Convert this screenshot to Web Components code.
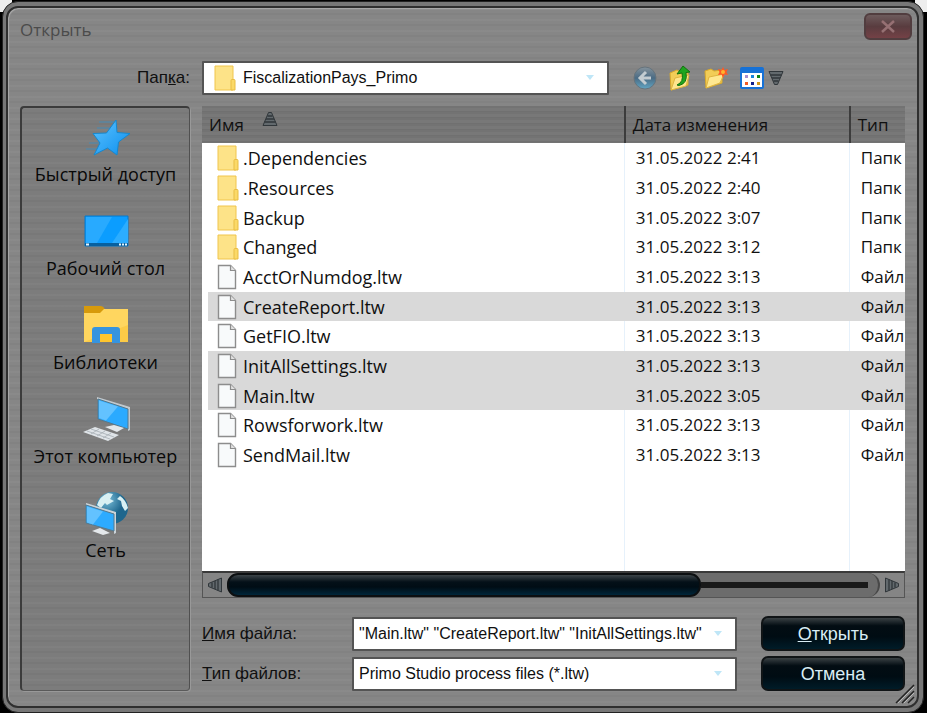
<!DOCTYPE html>
<html lang="ru">
<head>
<meta charset="utf-8">
<title>Открыть</title>
<style>
html,body{height:100%;margin:0;background:#000}
body{font-family:"Open Sans","Noto Sans",sans-serif;font-size:18px;color:#101010}
</style>
</head>
<body>
<open-dialog></open-dialog>
<script>
const define=(name,html,init)=>{
  const t=document.createElement('template');t.innerHTML=html;
  customElements.define(name,class extends HTMLElement{
    constructor(){super();this.attachShadow({mode:'open'}).append(t.content.cloneNode(true));}
    connectedCallback(){if(init&&!this.ready){this.ready=true;init(this,this.shadowRoot);}}
  });
};

const icons={
folder:'<svg width="22" height="26" viewBox="0 0 22 26"><path d="M1 1h18v24H1z" fill="#fde388" stroke="#f0c54c"/><path d="M17 15.5q0-1 1-1h2q1 0 1 1V25h-4z" fill="#fbd968" stroke="#e9bd43"/></svg>',
file:'<svg width="22" height="26" viewBox="0 0 22 26"><path d="M1.5 1.5h12l5 5v18h-17z" fill="#f8fafb" stroke="#8d8d8d" stroke-width="1.4"/><path d="M13.5 1.5v5h5" fill="#e2e2e2" stroke="#8d8d8d" stroke-width="1.2"/></svg>',
star:'<svg width="48" height="44" viewBox="0 0 48 44"><defs><linearGradient id="a" x1="0" x2="1" y2="1"><stop stop-color="#5cc2ff"/><stop offset="1" stop-color="#0c8fee"/></linearGradient></defs><path d="M17 7h16M15 13h13M7 28h12M4 34h13" stroke="#2a93d4" opacity=".65"/><path d="M34 5L35 17.500L48 18.500L36.500 27L35 40L25.500 33L12 40L18 28L11 18.500L24.500 18z" fill="url(#a)" stroke="#1588cf" stroke-linejoin="round"/></svg>',
desktop:'<svg width="48" height="44" viewBox="0 0 48 44"><path d="M3 7h43v30H3z" fill="#0b9dff" stroke="#0878c8"/><path d="M4 8h26L15 34H4z" fill="#28aaff"/><path d="M46 10L30 34h16z" fill="#2cadff"/><path d="M3 34h43v3H3z" fill="#07609f"/><path d="M4 34.500h3v2H4zm33 0h2v2h-2zm3 0h2v2h-2zm3 0h2v2h-2z" fill="#e6f6ff"/></svg>',
library:'<svg width="48" height="44" viewBox="0 0 48 44"><path d="M2 3h16q4 0 5 4v8H2z" fill="#d79a0b"/><path d="M2 10h16l4-4h24v33H2z" fill="#ffd65f"/><path d="M2 39l44-17v17z" fill="#fccb47"/><path d="M10 40V27q0-3 3-3h22q3 0 3 3v13h-8v-9H18v9z" fill="#3694df"/><path d="M18 31h12v8H18z" fill="#ffc62e"/></svg>',
computer:'<svg width="48" height="44" viewBox="0 0 48 44"><path d="M15 0l33 10v23l-2 1V12L15 2z" fill="#c2c9ce"/><path d="M16 2l30 10v20L16 22z" fill="#2baaff" stroke="#54798e"/><path d="M17 3.500l19 6-12 14-7-2.500z" fill="#63c2ff"/><path d="M23 30l9-2 10 3-7 4z" fill="#e4e8eb"/><path d="M1 35l12-5 24 8-11 6z" fill="#dfe4e8"/><path d="M5 34l23 8M9 32l23 8M9 37l8-5M15 39l8-5M21 41l8-5" stroke="#a6adb4" stroke-width=".8"/></svg>',
network:'<svg width="48" height="44" viewBox="0 0 48 44"><defs><radialGradient id="g" cx=".35" cy=".25"><stop stop-color="#79bdd8"/><stop offset="1" stop-color="#1e668d"/></radialGradient></defs><circle cx="30" cy="17" r="16" fill="url(#g)"/><path d="M15 14q3-9 11-12l5 1-3 5 4 2-7 4-2-2-4 5zM38 5q6 4 8 12l-3 3-3-5-1-5-4-2z" fill="#d9f0f3"/><path d="M4 12l30 9v21l-2 1V23L4 14z" fill="#cbd3d8"/><path d="M4 14l28 9v17L4 32z" fill="#2dabff" stroke="#557b90"/><path d="M5 15.500l16 5-10 13-6-2z" fill="#63c2ff"/><path d="M10 40l8-3 10 5-7 2z" fill="#e4e8eb"/></svg>',
back:'<svg width="24" height="24" viewBox="0 0 24 24"><defs><linearGradient id="b" y2="1" x2="0"><stop stop-color="#86939c"/><stop offset=".5" stop-color="#4a6b84"/><stop offset="1" stop-color="#62a6c4"/></linearGradient></defs><circle cx="12" cy="12" r="11" fill="url(#b)" stroke="#66737c"/><path d="M13 6l-6 6 6 6M7.500 12H18" fill="none" stroke="#c3ccd1" stroke-width="3"/></svg>',
up:'<svg width="24" height="26" viewBox="0 0 24 26"><path d="M2 8l7-3 3 2 8-1v14L3 25z" fill="#f2cd57" stroke="#d8a92b"/><path d="M7 13l14-3-3 11L3 25z" fill="#ffe58d" stroke="#dfb541"/><path d="M9 20q7-3 5-12l-5 1 6-8 7 6-4 .5q2 11-7 13z" fill="#1fa51f" stroke="#12720f"/></svg>',
create:'<svg width="26" height="24" viewBox="0 0 26 24"><path d="M2 5l6-2 3 2 8-1v13L3 22z" fill="#f2cd57" stroke="#d8a92b"/><path d="M6 11l15-3-4 9L3 22z" fill="#ffe891" stroke="#dfb541"/><path d="M20 1l1.500 3L25 3l-1.500 3L25 9l-3.500-.500L20 12l-1.500-3.500L15 9l1.500-3L15 3l3.500 1z" fill="#ff5924"/><circle cx="20" cy="6" r="2" fill="#ffb52e"/></svg>',
view:'<svg width="24" height="24" viewBox="0 0 24 24"><rect x="1" y="2" width="22" height="20" rx="1" fill="#fff" stroke="#1671d6" stroke-width="2"/><path d="M1 2h22v5H1z" fill="#1671d6"/><path d="M5 9h3v3H5z" fill="#a58ed0"/><path d="M11 9h3v3h-3z" fill="#1784dc"/><path d="M17 9h3v3h-3z" fill="#128516"/><path d="M5 16h3v3H5z" fill="#f35b24"/><path d="M11 16h3v3h-3z" fill="#10218d"/><path d="M17 16h3v3h-3z" fill="#d29818"/></svg>',
tri:'<svg width="16" height="16" viewBox="0 0 16 16"><path d="M1 1.500h14L9.500 14.500h-3z" fill="#62696d" stroke="#30363a"/><path d="M2.500 5h11M4 8h8M5.500 11h5" stroke="#30363a" stroke-width="1.300"/></svg>',
drop:'<svg width="10" height="6" viewBox="0 0 10 6"><path d="M1 0h8L5 5z" fill="#bfe6f7"/></svg>',
close:'<svg width="16" height="13" viewBox="0 0 16 13"><path d="M2 1l12 11M14 1L2 12" stroke="#967073" stroke-width="2.500"/></svg>'
};
define('ui-icon','<style>:host{display:block;flex:none}svg{display:block}:host([turn=up]) svg{transform:rotate(180deg)}:host([turn=left]) svg{transform:rotate(90deg)}:host([turn=right]) svg{transform:rotate(-90deg)}</style>',(h,s)=>s.append(document.createRange().createContextualFragment(icons[h.getAttribute('name')])));

define('place-link',`<style>
:host{display:block}
a{display:flex;flex-direction:column;align-items:center;height:94px;color:#080808;text-decoration:none;font-size:18px;line-height:26px;gap:2px;white-space:nowrap}
</style><a href="#"><slot name="icon"></slot><slot></slot></a>`);

define('places-bar',`<style>
:host{display:block;box-sizing:border-box;padding-top:7px;border:2px solid #3b3b3b;border-right:1px solid #505050;border-bottom:1px solid #5a5a5a;border-radius:4px;box-shadow:1px 1px 0 #999;background:#00000012}
</style><nav aria-label="Места"><slot></slot></nav>`);

define('pick-box',`<style>
:host{display:grid;grid-template-columns:var(--label-width,138px) minmax(0,1fr);column-gap:12px;align-items:center}
label{font:17px/24px "Liberation Sans",Arial,sans-serif;text-align:var(--label-align,left)}
.box{display:flex;align-items:center;box-sizing:border-box;height:34px;border:2px solid #545454;background:#fff;border-radius:1px;padding:0 12px 0 5px}
:host([icon]) .box{padding-left:10px}
select,input{appearance:none;flex:1;min-width:0;border:0;padding:0;margin:0;background:none;color:#101010;outline:0;font:16px/28px "Liberation Sans",Arial,sans-serif;height:28px}
input{margin-right:10px}
.lead{margin-right:7px}
</style><label for="field"><slot></slot></label><div class="box"></div>`,(h,s)=>{
  const b=s.querySelector('.box'),ic=h.getAttribute('icon');
  if(ic)b.innerHTML='<ui-icon class="lead" name="'+ic+'"></ui-icon>';
  const edit=h.hasAttribute('editable'),c=document.createElement(edit?'input':'select');
  c.id='field';
  if(edit){c.type='text';c.value=h.getAttribute('value');}else c.add(new Option(h.getAttribute('value')));
  b.append(c);b.insertAdjacentHTML('beforeend','<ui-icon name="drop"></ui-icon>');
});

define('tool-strip',`<style>
:host{display:flex;align-items:center;gap:11px}
button{border:0;padding:0;background:none;display:flex;align-items:center;gap:4px}
</style>
<button aria-label="Назад"><ui-icon name="back"></ui-icon></button>
<button aria-label="Вверх"><ui-icon name="up"></ui-icon></button>
<button aria-label="Новая папка"><ui-icon name="create"></ui-icon></button>
<button aria-label="Вид"><ui-icon name="view"></ui-icon><ui-icon name="tri"></ui-icon></button>`);

const files=[['.Dependencies','2:41',1],['.Resources','2:40',1],['Backup','3:07',1],['Changed','3:12',1],['AcctOrNumdog.ltw','3:13'],['CreateReport.ltw','3:13',0,1],['GetFIO.ltw','3:13'],['InitAllSettings.ltw','3:13',0,1],['Main.ltw','3:05',0,1],['Rowsforwork.ltw','3:13'],['SendMail.ltw','3:13']];
define('file-list',`<style>
:host{display:flex;overflow:hidden;background:#fff}
table{width:100%;table-layout:fixed;border-collapse:separate;border-spacing:0}
col.name{width:60%}col.date{width:32%}
th{height:37px;padding:0 0 0 7px;box-sizing:border-box;text-align:left;font-weight:400;font-size:17px;line-height:28px;background:repeating-linear-gradient(#737373 0 2px,#787878 2px 5px,#707070 5px 6px)}
th+th{border-left:2px solid #3c3c3c}
th div{display:flex;gap:18px}
td{padding:0 0 0 11px;font-size:17px;line-height:28px;white-space:nowrap;overflow:hidden;text-overflow:clip;border-left:1px solid #e6f1fb}
td:first-child{padding-left:15px;border-left:0;font-size:18px}
tr.row{height:30px}tr.row:nth-child(3n){height:29px}
.sel td{background:#d9d9d9;border-left-color:#d9d9d9}
.sel td:first-child{background:linear-gradient(90deg,#fff 6px,#d9d9d9 6px)}
.item{display:flex;align-items:center;gap:4px}
</style>
<table><colgroup><col class="name"><col class="date"><col></colgroup>
<thead><tr><th><div>Имя<ui-icon name="tri" turn="up"></ui-icon></div></th><th>Дата изменения</th><th>Тип</th></tr></thead>
<tbody></tbody></table>`,(h,s)=>{
  s.querySelector('tbody').innerHTML=files.map(([n,t,d,x])=>'<tr class="row'+(x?' sel':'')+'"><td><div class="item"><ui-icon name="'+(d?'folder':'file')+'"></ui-icon>'+n+'</div></td><td>31.05.2022 '+t+'</td><td>'+(d?'Папк':'Файл')+'</td></tr>').join('')+'<tr><td></td><td></td><td></td></tr>';
});

define('scroll-strip',`<style>
:host{display:flex;box-sizing:border-box;height:27px;border:1px solid #555;border-top:2px solid #3a3a3a;background:#858585}
button{flex:none;width:24px;border:0;padding:0;background:none;display:grid;place-items:center}
.track{flex:1;display:flex;align-items:center;background:#6c6c6c;border-right:2px solid #484848;border-radius:12px;padding-right:10px}
.thumb{flex:none;box-sizing:border-box;width:74%;height:100%;border:2px solid #0c0f11;border-radius:11px;background:linear-gradient(#3b4347,#041018 35%,#000d15 60%,#00263a)}
.line{flex:1;height:6px;background:#191919}
</style><button aria-label="Влево"><ui-icon name="tri" turn="left"></ui-icon></button><div class="track"><div class="thumb"></div><div class="line"></div></div><button aria-label="Вправо"><ui-icon name="tri" turn="right"></ui-icon></button>`);

define('dark-button',`<style>
:host{display:block}
button{box-sizing:border-box;width:100%;height:35px;border:2px solid #101416;border-radius:7px;background:linear-gradient(#3a4144,#030d13 25%,#000c13 60%,#001c28);color:#d9edf5;font:18px/28px "Liberation Sans",Arial,sans-serif;padding:0}
</style><button><slot></slot></button>`);

define('open-dialog',`<style>
:host{display:block;box-sizing:border-box;height:100%;padding:1px 3px 0 2px;background:linear-gradient(90deg,#eee 0 12px,#000 12px calc(100% - 12px),#eee calc(100% - 12px)) top/100% 12px no-repeat,#000}
.frame{box-sizing:border-box;height:100%;border:1px solid #222;border-radius:16px;padding:4px 4px 4px 3px;background:#777}
.pane{box-sizing:border-box;height:100%;border:2px solid #2f2f2f;border-radius:12px;box-shadow:inset 1px 1px 1px #aaa;padding:5px 12px 15px 12px;display:flex;flex-direction:column;background:repeating-linear-gradient(#ffffff08 0 2px,#0000 2px 5px,#00000008 5px 7px,#0000 7px 11px),#868686}
header{display:flex;justify-content:space-between;align-items:flex-start;height:48px}
h1{margin:0;font-weight:400;font-size:17px;line-height:34px;color:#4b4b4b}
.close{box-sizing:border-box;width:48px;height:27px;border:2px solid #513d3f;border-radius:6px;background:linear-gradient(#6d5b5c,#593c3f 50%,#744146);padding:0;display:grid;place-items:center;margin-right:-7px}
.look{display:grid;grid-template-columns:minmax(0,589px) auto;justify-content:start;column-gap:24px;align-items:center;padding-bottom:11px}
.look pick-box{--label-width:170px;--label-align:right}
main{flex:1;min-height:0;display:grid;grid-template-columns:170px minmax(0,1fr);column-gap:12px}
.right{display:flex;flex-direction:column;min-height:0}
file-list{flex:1;min-height:0}
.fields{display:grid;grid-template-columns:minmax(0,1fr) 144px;column-gap:24px;row-gap:5px;align-items:center;padding-top:18px}
.grip{position:absolute;right:12px;bottom:9px}
</style>
<div class="frame"><div class="pane">
<header><h1>Открыть</h1><button class="close" aria-label="Закрыть"><ui-icon name="close"></ui-icon></button></header>
<div class="look"><pick-box icon="folder" value="FiscalizationPays_Primo">Пап<u>к</u>а:</pick-box><tool-strip></tool-strip></div>
<main>
<places-bar><place-link><ui-icon slot="icon" name="star"></ui-icon>Быстрый доступ</place-link><place-link><ui-icon slot="icon" name="desktop"></ui-icon>Рабочий стол</place-link><place-link><ui-icon slot="icon" name="library"></ui-icon>Библиотеки</place-link><place-link><ui-icon slot="icon" name="computer"></ui-icon>Этот компьютер</place-link><place-link><ui-icon slot="icon" name="network"></ui-icon>Сеть</place-link></places-bar>
<div class="right"><file-list></file-list><scroll-strip></scroll-strip>
<div class="fields"><pick-box editable value='"Main.ltw" "CreateReport.ltw" "InitAllSettings.ltw"'><u>И</u>мя файла:</pick-box><dark-button><u>О</u>ткрыть</dark-button>
<pick-box value="Primo Studio process files (*.ltw)"><u>Т</u>ип файлов:</pick-box><dark-button>Отмена</dark-button></div></div>
</main>
</div></div>
<svg class="grip" width="20" height="20" viewBox="0 0 20 20" aria-hidden="true"><path d="M1 19L19 1M7 19L19 7M13 19l6-6" stroke="#222" stroke-width="1.500"/><path d="M3 19L19 3M9 19L19 9" stroke="#bbb"/></svg>`);
</script>
</body>
</html>
